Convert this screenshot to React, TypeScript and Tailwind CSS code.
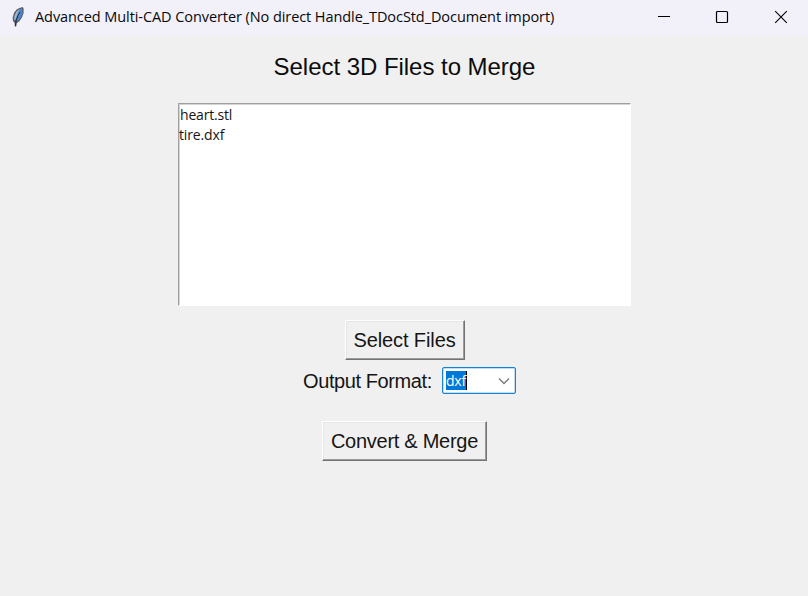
import type { ReactNode } from "react";

function FeatherIcon() {
  return (
    <svg width="14" height="22" viewBox="0 0 14 22" className="mb-[2px] shrink-0">
      <path d="M8.4 2 L11.8 1 L12.6 2.6 L12.6 7 L11 11.6 L8.2 15.6 L5.8 17 L5.2 20.4 L3.8 20.4 L3.6 17 L2 15 L1.6 11.5 L3.2 6.6 L5.6 3.6 Z" fill="#5c6168" />
      <path d="M10.8 2.2 L11.6 6.4 L10 11 L7.4 14.6 L5.2 15 L5.6 10 L7.8 4.2 Z" fill="#4688d2" />
      <path d="M8.8 2.8 L5.4 5.8 L3.4 10 L3 13.4 L4.4 14 L6 9.4 Z" fill="#9fb6cc" />
      <path d="M9 6 L7 9.4 L5.2 14.5 L4.4 20" fill="none" stroke="#1b2431" strokeWidth="0.9" />
    </svg>
  );
}

function TitleBar() {
  return (
    <header className="flex h-9 items-center bg-[#f2f1f9] pl-[11px]">
      <FeatherIcon />
      <h1 className="ml-[10px] -mt-[2px] whitespace-nowrap font-['Open_Sans',sans-serif] text-[14.5px] leading-5 tracking-[-0.075px] text-[#08080a]">
        Advanced Multi-CAD Converter (No direct Handle_TDocStd_Document import)
      </h1>
      <div className="ml-auto flex items-center pr-[20px] pb-[2px]">
        <svg width="14" height="14" viewBox="0 0 14 14" fill="none" stroke="#000">
          <path d="M1 6.5H13" />
        </svg>
        <svg className="ml-[44px]" width="14" height="14" viewBox="0 0 14 14" fill="none" stroke="#000" strokeWidth="1.2">
          <rect x="1.5" y="1.5" width="11" height="11" rx="1" />
        </svg>
        <svg className="ml-[45px]" width="14" height="14" viewBox="0 0 14 14" fill="none" stroke="#000" strokeWidth="1.1">
          <path d="M1.2 1.2L12.8 12.8M12.8 1.2L1.2 12.8" />
        </svg>
      </div>
    </header>
  );
}

function RaisedButton({ className, children }: { className: string; children: ReactNode }) {
  return (
    <button
      className={`flex h-10 items-center justify-center whitespace-nowrap border-t border-r border-b border-l border-t-white border-l-white border-r-[#737373] border-b-[#737373] bg-[#f0f0f0] text-[20px] leading-6 text-[#151515] shadow-[inset_-1px_-1px_0_#9c9c9c,inset_1px_1px_0_#e5e5e5] ${className}`}
    >
      {children}
    </button>
  );
}

export default function App() {
  return (
    <div className="flex h-[596px] w-[808px] flex-col overflow-hidden bg-[#f0f0f0] font-['Liberation_Sans',Arial,sans-serif]">
      <TitleBar />
      <main className="flex flex-col items-center pl-px">
        <h2 className="mt-[16px] h-[30px] whitespace-nowrap text-[24px] leading-[30px] tracking-[-0.04px] text-[#0c0c0c]">
          Select 3D Files to Merge
        </h2>
        <ul className="mt-[21px] h-[203px] w-[453px] border-t border-r border-b border-l border-t-[#a0a0a0] border-l-[#a0a0a0] border-r-white border-b-white bg-white pt-px font-['Open_Sans',sans-serif] text-[14px] leading-5 text-[#151515] shadow-[inset_1px_1px_0_#d4d4d4]">
          <li className="pl-px tracking-[-0.2px]">heart.stl</li>
          <li className="tracking-[-0.15px]">tire.dxf</li>
        </ul>
        <RaisedButton className="mt-[14px] w-[120px] tracking-[-0.1px]">Select Files</RaisedButton>
        <div className="mt-[7px] flex h-[27px] w-[223px] items-center justify-between pl-[10px]">
          <label className="mt-px whitespace-nowrap text-[20px] leading-6 tracking-[-0.4px] text-[#151515]">Output Format:</label>
          <div className="flex h-[27px] w-[74px] items-center justify-between rounded-[2px] border border-[#1683d8] bg-white pr-[5px] pl-[3px] shadow-[inset_0_0_0_0.5px_#83bdea]">
            <span className="h-[19px] border-r border-black bg-[#0078d7] font-['Open_Sans',sans-serif] text-[14px] leading-[19px] tracking-[-0.2px] text-white">
              dxf
            </span>
            <svg width="12" height="8" viewBox="0 0 12 8" fill="none" stroke="#7c7c7c" strokeWidth="1.4">
              <path d="M1 1.5L6 6.5L11 1.5" />
            </svg>
          </div>
        </div>
        <RaisedButton className="mt-[27px] w-[165px] tracking-[-0.27px]">Convert &amp; Merge</RaisedButton>
      </main>
    </div>
  );
}
